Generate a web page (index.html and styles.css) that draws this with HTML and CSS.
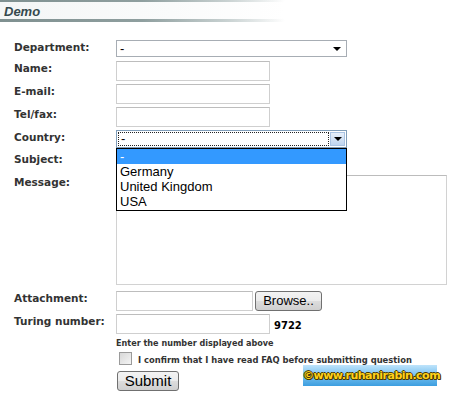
FILE: index.html
```html
<!DOCTYPE html>
<html>
<head>
<meta charset="utf-8">
<link rel="stylesheet" href="styles.css">
</head>
<body>
<div class="header"><span class="header-title">Demo</span></div>
<form class="form">
  <div class="row row-dept">
    <div class="label">Department:</div>
    <div class="select select-dept"><span class="select-text">-</span><span class="arrow"></span></div>
  </div>
  <div class="row">
    <div class="label">Name:</div>
    <input class="input" type="text">
  </div>
  <div class="row">
    <div class="label">E-mail:</div>
    <input class="input" type="text">
  </div>
  <div class="row">
    <div class="label">Tel/fax:</div>
    <input class="input" type="text">
  </div>
  <div class="row row-country">
    <div class="label">Country:</div>
    <div class="select select-country">
      <span class="focus-area"><span class="select-text">-</span></span>
      <span class="drop-btn"><span class="arrow"></span></span>
      <div class="dropdown">
        <div class="option option-selected">-</div>
        <div class="option">Germany</div>
        <div class="option">United Kingdom</div>
        <div class="option">USA</div>
      </div>
    </div>
  </div>
  <div class="row row-subject">
    <div class="label">Subject:</div>
    <input class="input" type="text">
  </div>
  <div class="row row-message">
    <div class="label">Message:</div>
    <textarea class="textarea"></textarea>
  </div>
  <div class="row row-attach">
    <div class="label">Attachment:</div>
    <input class="input input-file" type="text">
    <button type="button" class="btn btn-browse">Browse..</button>
  </div>
  <div class="row row-turing">
    <div class="label">Turing number:</div>
    <input class="input" type="text">
    <span class="turing-code">9722</span>
  </div>
  <div class="row row-hint">
    <div class="label"></div>
    <div class="hint">Enter the number displayed above</div>
  </div>
  <div class="row row-confirm">
    <div class="label"></div>
    <span class="checkbox"></span>
    <span class="confirm-text">I confirm that I have read FAQ before submitting question</span>
  </div>
  <div class="row row-submit">
    <div class="label"></div>
    <button type="button" class="btn btn-submit">Submit</button>
  </div>
</form>
<div class="watermark">©www.ruhanirabin.com</div>
</body>
</html>
```

FILE: styles.css
```css
* { box-sizing: border-box; }
html, body { margin: 0; padding: 0; background: #fff; }
body {
  width: 450px;
  height: 397px;
  overflow: hidden;
  position: relative;
  font-family: "DejaVu Sans", Verdana, sans-serif;
  color: #333;
}

.header {
  position: relative;
  width: 285px;
  height: 22px;
  background: linear-gradient(to right, #f4f6f6 0%, #fafbfb 60%, rgba(255,255,255,0) 100%);
}
.header::before,
.header::after {
  content: "";
  position: absolute;
  left: 0;
  right: 0;
  background: linear-gradient(to right, #7f9090 0%, #8f9f9f 50%, #c9d2d2 80%, rgba(255,255,255,0) 100%);
}
.header::before { top: 0; height: 2px; }
.header::after { top: 19px; height: 3px; }
.header-title {
  position: absolute;
  left: 4px;
  top: 4px;
  font-family: "Liberation Sans", Arial, sans-serif;
  font-style: italic;
  font-weight: bold;
  font-size: 13px;
  line-height: 16px;
  color: #36494e;
}

.form {
  display: flex;
  flex-direction: column;
  padding-left: 14px;
  margin-top: 18px;
}
.row {
  display: flex;
  align-items: flex-start;
  margin-bottom: 3px;
}
.label {
  width: 102px;
  flex: none;
  font-weight: bold;
  font-size: 10.5px;
  line-height: 14px;
  color: #333;
}

.input {
  width: 154px;
  height: 20px;
  margin: 0;
  border: 1px solid #cfcfcf;
  border-top-color: #bdbdbd;
  background: #fff;
  padding: 0 2px;
}

.select {
  position: relative;
  width: 231px;
  background: #fff;
  display: flex;
  font-family: "Liberation Sans", Arial, sans-serif;
  font-size: 13px;
  color: #000;
}
.select-dept {
  height: 17px;
  border: 1px solid #a7adb4;
  align-items: center;
  padding-left: 3px;
}
.select-text { line-height: 14px; }
.arrow {
  width: 0;
  height: 0;
  border-left: 4px solid transparent;
  border-right: 4px solid transparent;
  border-top: 4px solid #000;
}
.select-dept .arrow {
  position: absolute;
  right: 5px;
  top: 6px;
}
.row-dept { margin-bottom: 4px; }

.select-country {
  height: 18px;
  border: 1px solid #7f9db9;
  padding: 1px;
}
.focus-area {
  flex: 1;
  border: 1px dotted #222;
  padding-left: 2px;
  display: flex;
  align-items: center;
}
.drop-btn {
  width: 15px;
  margin-left: 1px;
  border: 1px solid #a9c3e3;
  background: linear-gradient(#e6effa, #bfd5f0);
  display: flex;
  align-items: center;
  justify-content: center;
}
.row-country { margin-bottom: 4px; }

.dropdown {
  position: absolute;
  left: -1px;
  top: 17px;
  width: 231px;
  height: 63px;
  border: 1px solid #000;
  background: #fff;
  z-index: 5;
}
.option {
  height: 15px;
  line-height: 15px;
  padding-left: 3px;
  font-size: 13px;
  color: #000;
}
.option-selected {
  background: #3399ff;
  color: #fff;
}

.textarea {
  width: 331px;
  height: 110px;
  margin: 0;
  border: 1px solid #d2d2d2;
  border-top-color: #bcbcbc;
  resize: none;
  background: #fff;
}
.row-message { margin-bottom: 6px; }

.input-file { width: 137px; }
.btn {
  font-family: "Liberation Sans", Arial, sans-serif;
  color: #000;
  border: 1px solid #707070;
  border-radius: 3px;
  background: linear-gradient(#f3f3f3 0%, #ebebeb 50%, #dddddd 51%, #cfcfcf 100%);
  padding: 0;
  margin: 0;
}
.btn-browse {
  width: 67px;
  height: 20px;
  margin-left: 2px;
  font-size: 13px;
  line-height: 18px;
}

.turing-code {
  margin-left: 4px;
  margin-top: 6px;
  font-weight: bold;
  font-size: 10px;
  line-height: 12px;
  color: #000;
}
.row-turing { margin-bottom: 3px; }

.hint {
  font-weight: bold;
  font-size: 8.1px;
  line-height: 12px;
  color: #333;
}
.row-hint { margin-bottom: 3px; }

.checkbox {
  width: 13px;
  height: 13px;
  margin-left: 3px;
  margin-top: 0;
  border: 1px solid #9a9a9a;
  background: linear-gradient(135deg, #d8d8d8, #f4f4f4);
}
.confirm-text {
  margin-left: 6px;
  margin-top: 2px;
  font-weight: bold;
  font-size: 8.4px;
  line-height: 12px;
  color: #333;
}
.row-confirm { margin-bottom: 5px; }

.btn-submit {
  width: 62px;
  height: 20px;
  margin-left: 1px;
  font-size: 15px;
  line-height: 18px;
}

.watermark {
  position: absolute;
  left: 303px;
  top: 365px;
  width: 134px;
  height: 21px;
  background: linear-gradient(#bfe4fb 0%, #7cc3f0 45%, #3c9ee0 100%);
  font-family: "DejaVu Sans", Verdana, sans-serif;
  font-weight: bold;
  font-size: 11px;
  line-height: 21px;
  text-align: center;
  color: #ffd21a;
  letter-spacing: -0.5px;
  text-shadow: 1px 0 0 #4a3a00, -1px 0 0 #4a3a00, 0 1px 0 #4a3a00, 0 -1px 0 #4a3a00, 1px 1px 0 #4a3a00;
}
```
